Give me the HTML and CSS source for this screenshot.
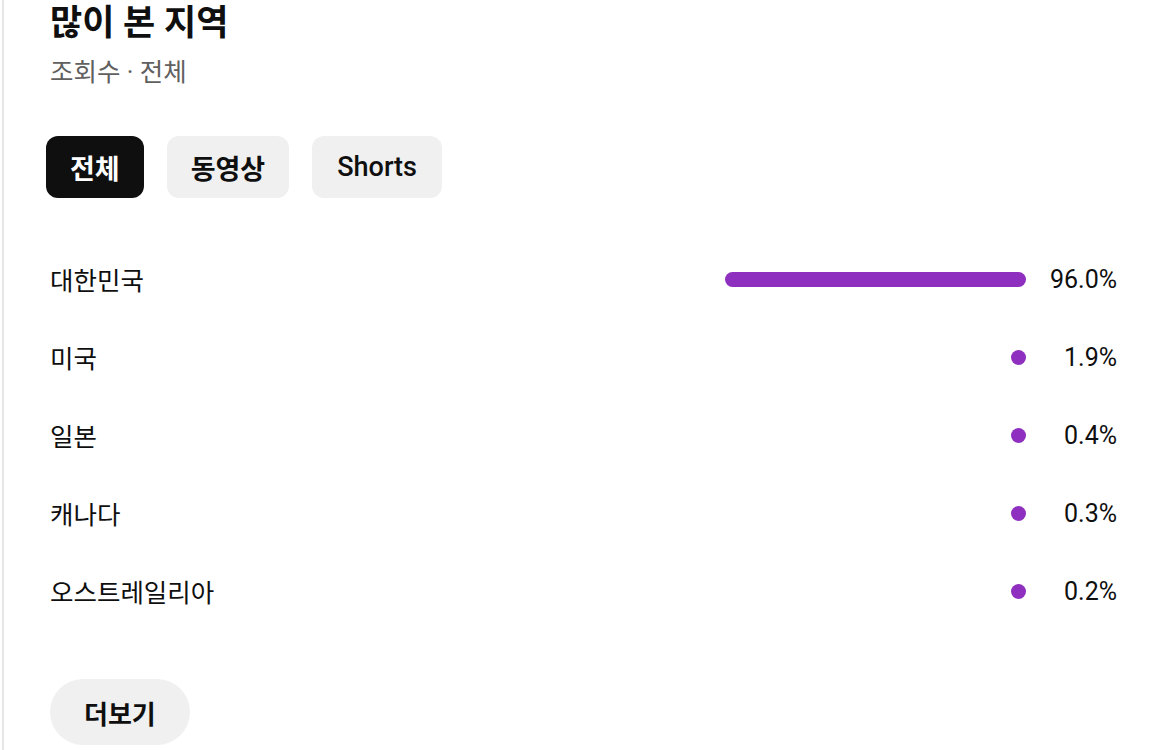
FILE: index.html
```html
<!DOCTYPE html>
<html lang="ko">
<head>
<meta charset="utf-8">
<title>많이 본 지역</title>
<link rel="stylesheet" href="styles.css">
</head>
<body>
<section class="card">
  <h2 class="title">많이 본 지역</h2>
  <div class="subtitle">조회수 · 전체</div>
  <div class="chips">
    <button class="chip chip-active">전체</button>
    <button class="chip">동영상</button>
    <button class="chip chip-latin">Shorts</button>
  </div>
  <ul class="rows">
    <li class="row"><span class="name">대한민국</span><span class="track"><span class="bar" style="width:301px"></span></span><span class="pct">96.0%</span></li>
    <li class="row"><span class="name">미국</span><span class="track"><span class="bar dot"></span></span><span class="pct">1.9%</span></li>
    <li class="row"><span class="name">일본</span><span class="track"><span class="bar dot"></span></span><span class="pct">0.4%</span></li>
    <li class="row"><span class="name">캐나다</span><span class="track"><span class="bar dot"></span></span><span class="pct">0.3%</span></li>
    <li class="row"><span class="name">오스트레일리아</span><span class="track"><span class="bar dot"></span></span><span class="pct">0.2%</span></li>
  </ul>
  <button class="more">더보기</button>
</section>
</body>
</html>
```
FILE: styles.css
```css
html, body {
  margin: 0;
  padding: 0;
  background: #ffffff;
}
body {
  font-family: Roboto, "Noto Sans CJK KR", sans-serif;
  color: #0f0f0f;
}
.card {
  margin-left: 2px;
  border-left: 2px solid #e6e6e6;
  min-height: 750px;
  box-sizing: border-box;
  padding: 4px 54px 0 46px;
}
.title {
  margin: 0;
  font-size: 35px;
  line-height: 40px;
  font-weight: 700;
  color: #0f0f0f;
}
.subtitle {
  margin-top: 14px;
  font-size: 25.5px;
  line-height: 28px;
  color: #606060;
}
.chips {
  display: flex;
  gap: 23px;
  margin-top: 50px;
  margin-left: -4px;
}
.chip {
  height: 62px;
  border: none;
  border-radius: 12px;
  background: #f0f0f0;
  color: #0f0f0f;
  font-family: Roboto, "Noto Sans CJK KR", sans-serif;
  font-size: 27px;
  font-weight: 700;
  padding: 0 24px;
  cursor: pointer;
}
.chip-active {
  background: #0f0f0f;
  color: #ffffff;
}
.chip-latin {
  font-weight: 500;
  padding: 0 25px;
}
.rows {
  list-style: none;
  margin: 41px 0 0 0;
  padding: 0;
}
.row {
  display: flex;
  align-items: center;
  height: 78px;
}
.name {
  flex: 0 0 auto;
  font-size: 25.5px;
  color: #0f0f0f;
}
.track {
  flex: 1 1 auto;
  display: flex;
  justify-content: flex-end;
  align-items: center;
  padding-top: 2px;
}
.bar {
  display: block;
  height: 15px;
  border-radius: 8px;
  background: #8e2fbf;
}
.dot {
  width: 15px;
}
.pct {
  flex: 0 0 91px;
  text-align: right;
  font-size: 25px;
  color: #0f0f0f;
  padding-top: 2px;
}
.more {
  margin-top: 50px;
  height: 66px;
  padding: 0 34px;
  border: none;
  border-radius: 33px;
  background: #f0f0f0;
  color: #0f0f0f;
  font-family: Roboto, "Noto Sans CJK KR", sans-serif;
  font-size: 26px;
  font-weight: 700;
  cursor: pointer;
}
```
